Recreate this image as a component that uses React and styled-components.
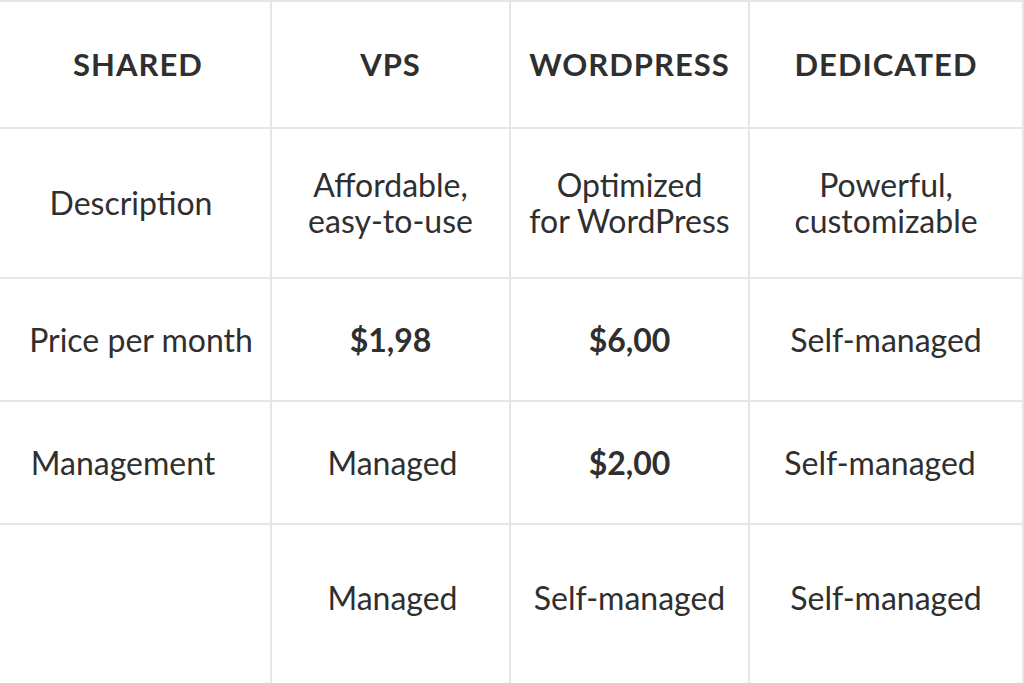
import React from "react";
import styled, { createGlobalStyle } from "styled-components";

const plans = [
  { name: "SHARED", shift: 3 },
  { name: "VPS" },
  { name: "WORDPRESS" },
  { name: "DEDICATED" },
];

const rows = [
  {
    height: 150,
    cells: [
      { text: "Description", shift: -4 },
      { text: "Affordable,\neasy-to-use" },
      { text: "Optimized\nfor WordPress" },
      { text: "Powerful,\ncustomizable" },
    ],
  },
  {
    height: 123,
    cells: [
      { text: "Price per month", shift: 6 },
      { text: "$1,98", bold: true },
      { text: "$6,00", bold: true },
      { text: "Self-managed" },
    ],
  },
  {
    height: 123,
    cells: [
      { text: "Management", shift: -12 },
      { text: "Managed", shift: 2 },
      { text: "$2,00", bold: true },
      { text: "Self-managed", shift: -6 },
    ],
  },
  {
    height: 160,
    lift: 12,
    cells: [
      { text: "" },
      { text: "Managed", shift: 2 },
      { text: "Self-managed" },
      { text: "Self-managed" },
    ],
  },
];

const GlobalStyle = createGlobalStyle`
  html, body {
    margin: 0;
    padding: 0;
    background: #ffffff;
  }
  body {
    font-family: Lato, "Open Sans", sans-serif;
    color: #2f2f2f;
  }
`;

const App = () => {
  return (
    <>
      <GlobalStyle />
      <Table>
        <Row height={127}>
          {plans.map((plan) => (
            <HeadCell key={plan.name} shift={plan.shift}>
              {plan.name}
            </HeadCell>
          ))}
        </Row>
        {rows.map((row, rowIndex) => (
          <Row key={rowIndex} height={row.height}>
            {row.cells.map((cell, cellIndex) => (
              <Cell
                key={cellIndex}
                bold={cell.bold}
                shift={cell.shift}
                lift={row.lift}
              >
                {cell.text}
              </Cell>
            ))}
          </Row>
        ))}
      </Table>
    </>
  );
};

const Table = styled.div`
  width: 1024px;
  height: 683px;
  box-sizing: border-box;
  border-top: 2px solid #e6e6e6;
  display: flex;
  flex-direction: column;
  overflow: hidden;
`;

const Row = styled.div`
  display: grid;
  grid-template-columns: 272px 239px 239px 274px;
  height: ${(props) => props.height}px;
  flex-shrink: 0;
  box-sizing: border-box;
  border-bottom: 2px solid #e6e6e6;
`;

const Cell = styled.div`
  display: flex;
  align-items: center;
  justify-content: center;
  text-align: center;
  white-space: pre-line;
  box-sizing: border-box;
  border-right: 2px solid #e6e6e6;
  padding-left: ${(props) => (props.shift > 0 ? props.shift * 2 : 0)}px;
  padding-right: ${(props) => (props.shift < 0 ? -props.shift * 2 : 0)}px;
  padding-bottom: ${(props) => props.lift || 0}px;
  font-size: 32px;
  line-height: 36px;
  font-weight: ${(props) => (props.bold ? 700 : 400)};
`;

const HeadCell = styled(Cell)`
  font-weight: 700;
  font-size: 31px;
  letter-spacing: 1px;
  padding-bottom: 2px;
`;

export default App;
